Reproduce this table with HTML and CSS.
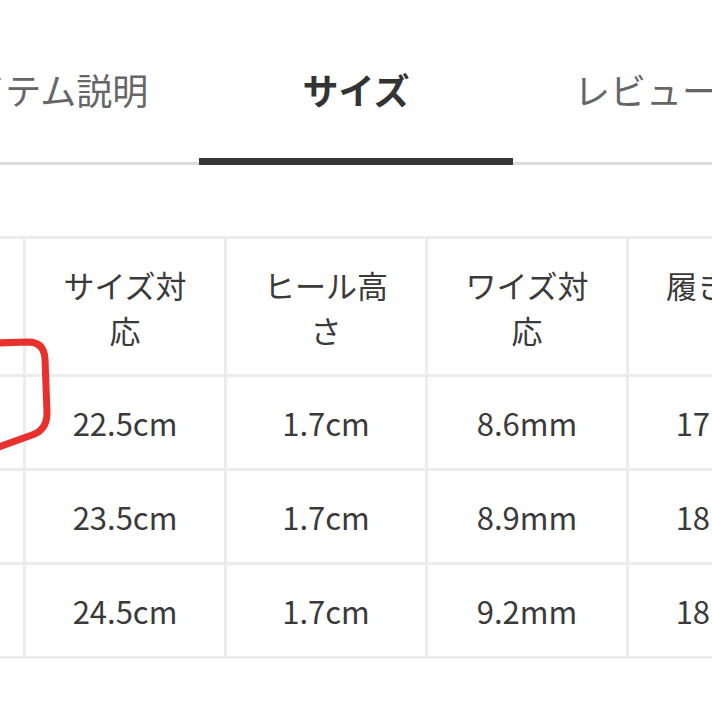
FILE: index.html
```html
<!DOCTYPE html>
<html lang="ja">
<head>
<meta charset="utf-8">
<title>サイズ</title>
<link rel="stylesheet" href="styles.css">
</head>
<body>
<div class="page">
  <nav class="tabs">
    <div class="tab">アイテム説明</div>
    <div class="tab active">サイズ</div>
    <div class="tab right">レビュー</div>
  </nav>
  <div class="table-wrap">
    <table class="size-table">
      <thead>
        <tr>
          <th>サイズ</th>
          <th>サイズ対応</th>
          <th>ヒール高さ</th>
          <th>ワイズ対応</th>
          <th>履き口周り</th>
        </tr>
      </thead>
      <tbody>
        <tr><td>35</td><td>22.5cm</td><td>1.7cm</td><td>8.6mm</td><td>17.5cm</td></tr>
        <tr><td>36</td><td>23.5cm</td><td>1.7cm</td><td>8.9mm</td><td>18.0cm</td></tr>
        <tr><td>37</td><td>24.5cm</td><td>1.7cm</td><td>9.2mm</td><td>18.5cm</td></tr>
      </tbody>
    </table>
    <svg class="mark" width="60" height="130" viewBox="0 0 60 130" aria-hidden="true">
      <path d="M -4 12 L 28 11 Q 44 11 45 28 L 47 82 Q 47 99 32 104 L -4 117" fill="none" stroke="#e8312d" stroke-width="7" stroke-linecap="round" stroke-linejoin="round"/>
    </svg>
  </div>
</div>
</body>
</html>
```
FILE: styles.css
```css
html, body {
  margin: 0;
  padding: 0;
  background: #ffffff;
}

body {
  width: 712px;
  height: 712px;
  overflow: hidden;
  font-family: "Noto Sans CJK JP", "Noto Sans", sans-serif;
}

.page {
  position: relative;
  width: 712px;
}

.tabs {
  display: flex;
  margin-left: -115px;
  border-bottom: 3px solid #dcdcdc;
  white-space: nowrap;
}

.tab {
  position: relative;
  flex: 0 0 314px;
  padding: 62px 0 46px;
  line-height: 54px;
  font-size: 36px;
  color: #666666;
  text-align: center;
}

.tab.right {
  text-align: left;
  padding-left: 61px;
  box-sizing: border-box;
}

.tab.active {
  color: #333333;
  font-weight: 700;
}

.tab.active::after {
  content: "";
  position: absolute;
  left: 0;
  right: 0;
  bottom: -3px;
  height: 7px;
  background: #363636;
}

.table-wrap {
  position: relative;
  margin-top: 71px;
}

.size-table {
  margin-left: -178px;
  width: 1008px;
  table-layout: fixed;
  border-collapse: separate;
  border-spacing: 3px;
  background: #ececec;
}

.size-table th,
.size-table td {
  width: 198px;
  padding: 0 30px;
  box-sizing: border-box;
  background: #ffffff;
  color: #3a3a3a;
  font-size: 31px;
  font-weight: 400;
  line-height: 45px;
  text-align: center;
  vertical-align: middle;
}

.size-table th {
  height: 135px;
}

.size-table td {
  height: 91px;
}

.mark {
  position: absolute;
  left: 0;
  top: 95px;
}
```
